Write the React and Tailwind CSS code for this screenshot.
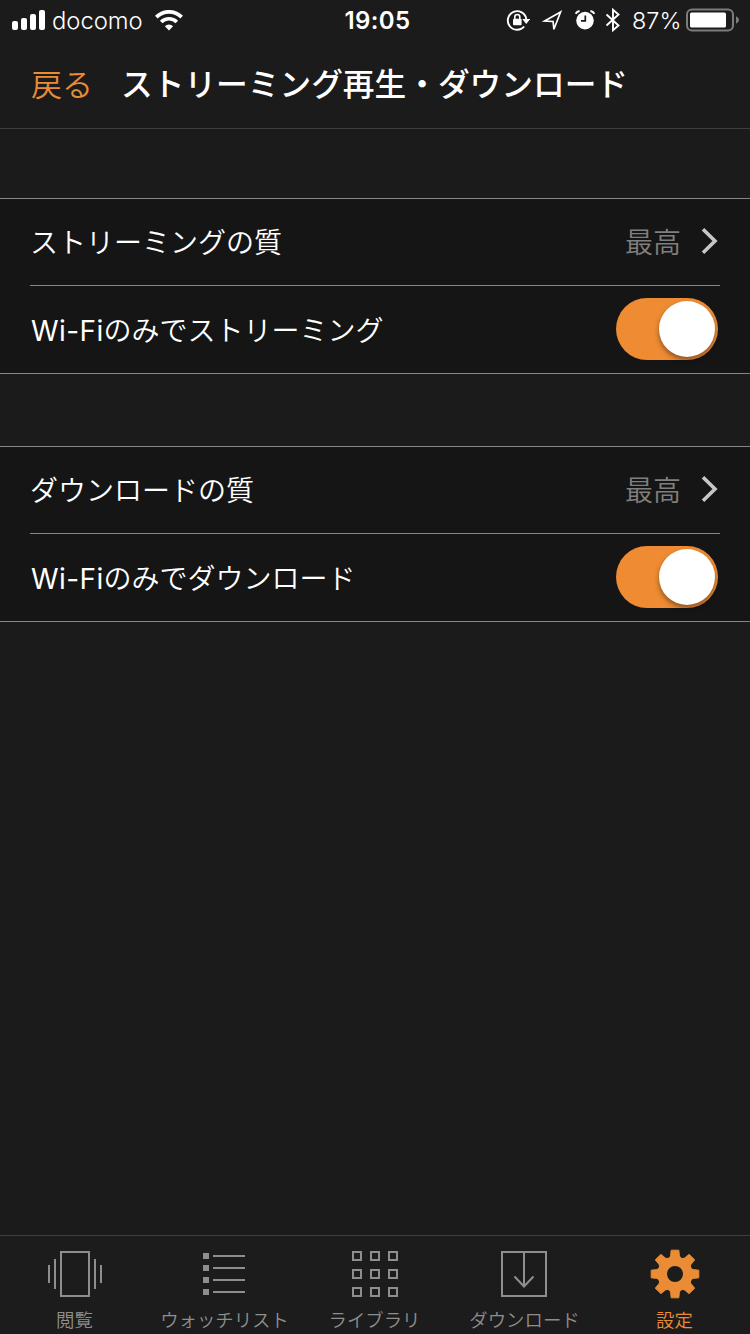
import { useState } from "react";

const SECTIONS = [
  {
    id: "streaming",
    quality: { label: "ストリーミングの質", value: "最高" },
    wifi: { label: "のみでストリーミング" },
  },
  {
    id: "download",
    quality: { label: "ダウンロードの質", value: "最高" },
    wifi: { label: "のみでダウンロード" },
  },
];

const TABS = [
  { id: "browse", label: "閲覧", Icon: BrowseIcon },
  { id: "watchlist", label: "ウォッチリスト", Icon: ListIcon },
  { id: "library", label: "ライブラリ", Icon: GridIcon },
  { id: "downloads", label: "ダウンロード", Icon: DownloadIcon },
  { id: "settings", label: "設定", Icon: GearIcon },
];

function BrowseIcon() {
  return (
    <svg width="56" height="50" viewBox="0 0 56 50" fill="none" stroke="currentColor" strokeWidth="2">
      <rect x="14" y="3" width="28" height="44" />
      <path d="M8 10v30M2 16v18M48 10v30M54 16v18" />
    </svg>
  );
}

function ListIcon() {
  return (
    <svg width="56" height="50" viewBox="0 0 56 50" fill="currentColor">
      {[4, 16, 28, 40].map((y) => (
        <g key={y}>
          <rect x="6" y={y} width="6" height="6" />
          <rect x="16" y={y + 2} width="32" height="2" />
        </g>
      ))}
    </svg>
  );
}

function GridIcon() {
  return (
    <svg width="56" height="50" viewBox="0 0 56 50" fill="none" stroke="currentColor" strokeWidth="2">
      {[3, 21, 39].map((y) => [6, 24, 42].map((x) => <rect key={`${x}-${y}`} x={x} y={y} width="8" height="8" />))}
    </svg>
  );
}

function DownloadIcon() {
  return (
    <svg width="56" height="50" viewBox="0 0 56 50" fill="none" stroke="currentColor" strokeWidth="2">
      <rect x="5" y="3" width="44" height="44" />
      <path d="M27 3v34" />
      <path d="M18 28l9 9.5 9-9.5" strokeLinecap="round" />
    </svg>
  );
}

function GearIcon() {
  return (
    <svg width="56" height="50" viewBox="0 0 56 50" fill="none" stroke="currentColor">
      <circle cx="28" cy="25" r="12.8" strokeWidth="9.6" />
      <g fill="currentColor" strokeWidth="1" strokeLinejoin="round">
        {[0, 45, 90, 135, 180, 225, 270, 315].map((a) => (
          <path key={a} d="M22 10L23.6 6.8L24.2 1.2h7.6L32.4 6.8L34 10z" transform={`rotate(${a} 28 25)`} />
        ))}
      </g>
    </svg>
  );
}

function StatusBar() {
  return (
    <div className="grid h-10 shrink-0 grid-cols-[1fr_auto_1fr] items-center font-['Inter','Liberation_Sans',sans-serif] text-[24px] leading-[38px]">
      <div className="flex items-center pl-3">
        <svg width="34" height="20" viewBox="0 0 34 20" fill="currentColor">
          <rect x="0" y="11" width="6" height="9" rx="2" />
          <rect x="9" y="8" width="6" height="12" rx="2" />
          <rect x="18" y="4" width="6" height="16" rx="2" />
          <rect x="27" y="0" width="6" height="20" rx="2" />
        </svg>
        <span className="ml-1.5 w-[92px] pt-0.5 text-[23.8px] font-[350]">docomo</span>
        <svg className="ml-[11px]" width="28" height="21" viewBox="0 0 28 21" fill="none" stroke="currentColor">
          <path d="M1.3 7.1a18 18 0 0 1 25.4 0" strokeWidth="3.8" />
          <path d="M6.2 12a11 11 0 0 1 15.6 0" strokeWidth="3.6" />
          <path d="M14 20.5l-4.1-4.3a5.8 5.8 0 0 1 8.2 0z" fill="currentColor" stroke="none" />
        </svg>
      </div>
      <span className="pt-0.5 pl-[5px] tracking-[0.4px] font-semibold">19:05</span>
      <div className="flex items-center justify-end pr-[11px]">
        <svg width="24" height="24" viewBox="0 0 24 24" fill="none" stroke="currentColor" strokeWidth="1.9">
          <path d="M18.2 18.5A9.3 9.3 0 1 1 20.3 11" />
          <path d="M16.3 11h7.8L20.2 16z" fill="currentColor" stroke="none" />
          <rect x="7" y="10.8" width="8.6" height="6.4" rx="1" fill="currentColor" stroke="none" />
          <path d="M8.8 11V9a2.5 2.5 0 0 1 5 0V11" strokeWidth="1.6" />
        </svg>
        <svg className="ml-3" width="22" height="22" viewBox="0 0 22 22" fill="none" stroke="currentColor" strokeWidth="1.7">
          <path d="M18.6 3L2.6 12l8.5.5.8 7.8z" />
        </svg>
        <svg className="ml-[10px]" width="22" height="22" viewBox="0 0 22 22" fill="none" stroke="currentColor">
          <circle cx="11" cy="11.6" r="8.8" fill="currentColor" stroke="none" />
          <path d="M11.3 6.4v5.5H7" stroke="#1c1c1c" strokeWidth="1.7" />
          <path d="M1.6 4.8Q3 2.4 5.6 2M16.4 2Q19 2.4 20.4 4.8" strokeWidth="2.1" />
        </svg>
        <svg className="ml-[9px]" width="16" height="24" viewBox="0 0 16 24" fill="none" stroke="currentColor" strokeWidth="1.9">
          <path d="M1.5 6.5l12 11L8 22.2V1.8l5.5 4.7-12 11" />
        </svg>
        <span className="ml-[11px] w-[49px] pt-0.5 text-[23.4px] font-[350] whitespace-nowrap">87%</span>
        <svg className="ml-[5px]" width="53" height="24" viewBox="0 0 53 24">
          <rect x="1" y="1.5" width="46" height="21" rx="5" fill="none" stroke="#7c7c7c" strokeWidth="2" />
          <rect x="4" y="4.5" width="36" height="15" rx="1.5" fill="currentColor" />
          <path d="M50 8.2q3 1.2 3 3.8t-3 3.8z" fill="#7c7c7c" />
        </svg>
      </div>
    </div>
  );
}

function Toggle({ on, onClick, label }) {
  return (
    <button
      type="button"
      role="switch"
      aria-checked={on}
      aria-label={label}
      onClick={onClick}
      className={`flex h-[62px] w-[102px] items-center rounded-full px-[3px] ${on ? "justify-end bg-[#ee8b33]" : "justify-start bg-[#444444]"}`}
    >
      <span className="h-14 w-14 rounded-full bg-white shadow-[0_3px_5px_rgba(0,0,0,0.4)]" />
    </button>
  );
}

function Section({ quality, wifi }) {
  const [on, setOn] = useState(true);
  return (
    <section className="border-y border-[#868686] bg-[#151515] text-[28px] font-[350] text-white">
      <div className="mx-[30px] flex h-[87px] items-center border-b border-[#868686] pb-0.5">
        <span className="flex-1">{quality.label}</span>
        <span className="text-[#7f7f7f]">{quality.value}</span>
        <svg className="mr-0.5 ml-5" width="17" height="28" viewBox="0 0 17 28" fill="none" stroke="#c7c7c7" strokeWidth="3.6">
          <path d="M2 2.2L14 14 2 25.8" />
        </svg>
      </div>
      <div className="flex h-[87px] items-center pr-8 pb-px pl-[31px]">
        <span className="flex-1 pt-0.5">
          <span className="font-['Inter'] font-normal tracking-[0.4px]">Wi-Fi</span>
          {wifi.label}
        </span>
        <Toggle on={on} onClick={() => setOn(!on)} label={`Wi-Fi${wifi.label}`} />
      </div>
    </section>
  );
}

export default function App() {
  const [active, setActive] = useState("settings");

  return (
    <div className="flex h-[1334px] w-[750px] flex-col bg-[#1b1b1b] font-['Noto_Sans_CJK_JP',sans-serif] text-white">
      <StatusBar />
      <header className="flex h-[89px] shrink-0 items-center border-b border-[#3e3e3e] px-[31px] pb-0.5">
        <button type="button" className="text-[31px] font-[350] text-[#e98c35]">戻る</button>
        <h1 className="ml-7 text-[31.7px] font-medium whitespace-nowrap">ストリーミング再生・ダウンロード</h1>
      </header>

      <main className="flex flex-1 flex-col gap-[72px] pt-[69px]">
        {SECTIONS.map((s) => (
          <Section key={s.id} quality={s.quality} wifi={s.wifi} />
        ))}
      </main>

      <nav className="grid h-[99px] shrink-0 grid-cols-5 border-t border-[#3e3e3e] bg-[#1c1c1c] pt-[13px]">
        {TABS.map(({ id, label, Icon }) => (
          <button
            key={id}
            type="button"
            onClick={() => setActive(id)}
            className={`flex flex-col items-center ${active === id ? "text-[#e98c35]" : "text-[#8e8e8e]"}`}
          >
            <Icon />
            <span className="mt-2.5 pr-px text-[18.4px] leading-5 font-[350] whitespace-nowrap">{label}</span>
          </button>
        ))}
      </nav>
    </div>
  );
}
